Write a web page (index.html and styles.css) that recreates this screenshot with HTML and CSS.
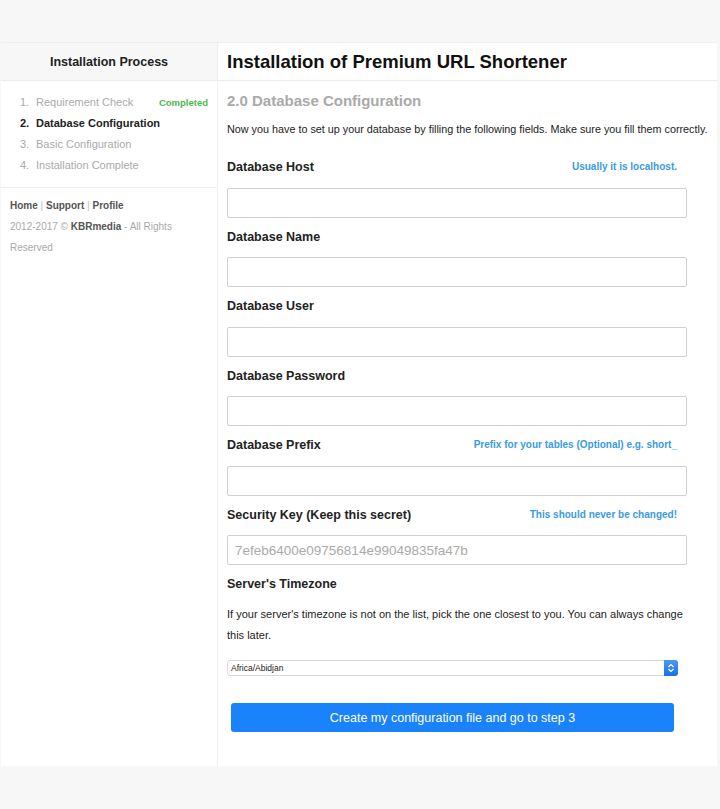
FILE: index.html
```html
<!DOCTYPE html>
<html>
	<head>
		<meta charset="utf-8" />
		<title>Installation of Premium URL Shortener</title>
		<link rel="stylesheet" href="styles.css">
	</head>
	<body>
		<div class="wrap">
			<div class="side">
				<div class="side-head">Installation Process</div>
				<ol class="steps">
					<li class="done"><span class="num">1.</span>Requirement Check <span class="ok">Completed</span></li>
					<li class="current"><span class="num">2.</span>Database Configuration</li>
					<li><span class="num">3.</span>Basic Configuration</li>
					<li><span class="num">4.</span>Installation Complete</li>
				</ol>
				<div class="side-foot">
					<a href="#">Home</a> <span class="sep">|</span> <a href="#">Support</a> <span class="sep">|</span> <a href="#">Profile</a><br>
					2012-2017 &copy; <b>KBRmedia</b> - All Rights Reserved
				</div>
			</div>
			<div class="main">
				<h1 class="main-head">Installation of Premium URL Shortener</h1>
				<div class="content">
					<h2>2.0 Database Configuration</h2>
					<p class="intro">Now you have to set up your database by filling the following fields. Make sure you fill them correctly.</p>

					<div class="field">
						<label>Database Host <span class="hint">Usually it is localhost.</span></label>
						<input type="text" class="input">
					</div>
					<div class="field">
						<label>Database Name</label>
						<input type="text" class="input">
					</div>
					<div class="field">
						<label>Database User</label>
						<input type="text" class="input">
					</div>
					<div class="field">
						<label>Database Password</label>
						<input type="password" class="input">
					</div>
					<div class="field">
						<label>Database Prefix <span class="hint">Prefix for your tables (Optional) e.g. short_</span></label>
						<input type="text" class="input">
					</div>
					<div class="field">
						<label>Security Key (Keep this secret) <span class="hint">This should never be changed!</span></label>
						<input type="text" class="input" placeholder="7efeb6400e09756814e99049835fa47b">
					</div>
					<div class="field">
						<label>Server's Timezone</label>
						<p class="note">If your server's timezone is not on the list, pick the one closest to you. You can always change this later.</p>
						<div class="select">
							<select>
								<option>Africa/Abidjan</option>
							</select>
							<span class="stepper">
								<svg width="8" height="10" viewBox="0 0 8 10"><path d="M1.5 4 L4 1.5 L6.5 4 M1.5 6 L4 8.5 L6.5 6" fill="none" stroke="#fff" stroke-width="1.2"/></svg>
							</span>
						</div>
					</div>
					<button type="button" class="btn">Create my configuration file and go to step 3</button>
				</div>
			</div>
		</div>
	</body>
</html>
```

FILE: styles.css
```css
body{
	margin:0;
	background:#f7f7f7;
	font-family:"Liberation Sans", Arial, sans-serif;
	color:#222;
}
.wrap{
	display:flex;
	margin:42px 3px 0 1px;
	background:#fff;
	border-top:1px solid #efefef;
}
.side{
	flex-shrink:0;
	width:216px;
	border-right:1px solid #efefef;
}
.side-head{
	height:37px;
	line-height:38px;
	background:#f7f7f7;
	border-bottom:1px solid #ececec;
	text-align:center;
	font-size:12.5px;
	font-weight:bold;
	color:#222;
}
.steps{
	list-style:none;
	margin:0;
	padding:11px 9px 11px 19px;
	border-bottom:1px solid #efefef;
	font-size:11px;
	line-height:21px;
	color:#aaa;
}
.steps li{
	display:flex;
}
.num{
	width:16px;
}
.steps .current{
	color:#222;
	font-weight:bold;
}
.ok{
	margin-left:auto;
	color:#4cb84c;
	font-weight:bold;
	font-size:9.5px;
}
.side-foot{
	padding:7px 9px;
	font-size:10px;
	line-height:21px;
	color:#aaa;
}
.side-foot a{
	color:#555;
	font-weight:bold;
	text-decoration:none;
}
.side-foot b{
	color:#555;
}
.sep{
	color:#bbb;
}
.main{
	flex:1;
	min-width:0;
}
.main-head{
	margin:0;
	height:37px;
	line-height:37px;
	padding-left:9px;
	border-bottom:1px solid #ececec;
	font-size:18.5px;
	font-weight:bold;
	color:#111;
}
.content{
	padding:0 31px 34px 9px;
}
h2{
	margin:10px 0 0;
	line-height:20px;
	font-size:15px;
	color:#aaa;
}
.intro{
	margin:8px 0 18px;
	line-height:20px;
	font-size:10.8px;
	white-space:nowrap;
}
.field label{
	display:flex;
	justify-content:space-between;
	line-height:20px;
	font-size:12.5px;
	font-weight:bold;
	padding-right:9px;
}
.hint{
	font-size:10px;
	color:#3a9be0;
}
.input{
	display:block;
	box-sizing:border-box;
	width:460px;
	height:30px;
	margin:10.5px 0 9px;
	padding:0 7px;
	border:1px solid #d0d0d0;
	border-radius:2px;
	font-family:inherit;
	font-size:13.5px;
	outline:none;
}
.input::placeholder{
	color:#aaa;
}
.note{
	margin:10px 0 0;
	font-size:11px;
	line-height:21px;
}
.select{
	display:flex;
	width:451px;
	height:16px;
	margin-top:14px;
	border:1px solid #d8d8d8;
	border-radius:3px;
	box-sizing:border-box;
	background:#fff;
}
.select select{
	flex:1;
	-webkit-appearance:none;
	appearance:none;
	border:0;
	background:transparent;
	font-family:inherit;
	font-size:8.5px;
	padding:0 3px;
	height:14px;
	color:#222;
	outline:none;
}
.stepper{
	width:14px;
	margin:-1px -1px -1px 0;
	border-radius:0 3px 3px 0;
	background:linear-gradient(#4a9bf5,#1a6ee6);
	display:flex;
	align-items:center;
	justify-content:center;
}
.btn{
	display:block;
	width:443px;
	height:29px;
	margin:27px 0 0 4px;
	border:0;
	border-radius:3px;
	background:#1a83fb;
	color:#fff;
	font-family:inherit;
	font-size:12.5px;
}
```
